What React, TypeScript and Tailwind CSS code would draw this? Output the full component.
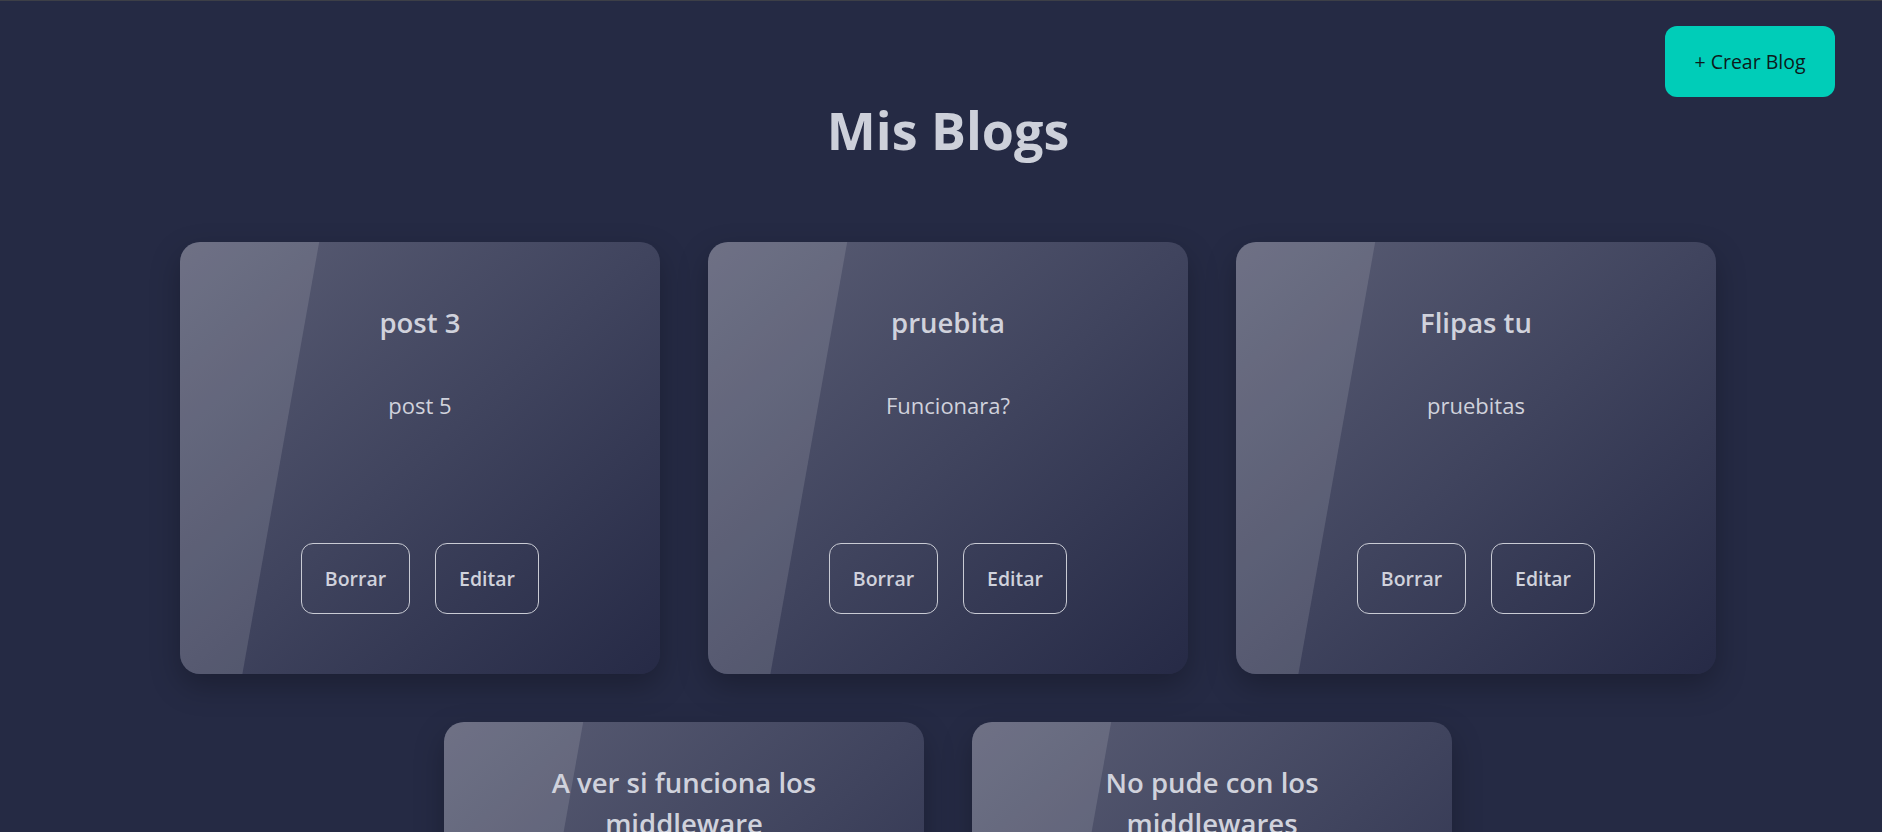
import React from "react";

type Blog = { title: string; desc: string };

const blogs: Blog[] = [
  { title: "post 3", desc: "post 5" },
  { title: "pruebita", desc: "Funcionara?" },
  { title: "Flipas tu", desc: "pruebitas" },
  { title: "A ver si funciona los middleware", desc: "middleware" },
  { title: "No pude con los middlewares", desc: "middlewares" },
];

function Card({ blog }: { blog: Blog }) {
  return (
    <div className="relative m-6 flex h-[432px] w-[480px] flex-col items-center justify-center overflow-hidden rounded-[20px] bg-linear-to-br from-[#5b5e75] via-[#40445e] to-[#262a46] shadow-[0_12px_30px_rgba(0,0,0,0.25)]">
      <div className="pointer-events-none absolute inset-0 bg-white/[0.12] [clip-path:polygon(0_0,29%_0,13%_100%,0_100%)]" />
      <h3 className="relative max-w-[340px] text-center text-[27.5px] leading-[41px] font-semibold text-[#d0d2dc]">
        {blog.title}
      </h3>
      <p className="relative mt-[44px] text-center text-[22px] leading-[36px] text-[#d0d2dc]">
        {blog.desc}
      </p>
      <div className="relative mt-[120px] flex gap-[25px]">
        <button className="flex h-[71px] w-[109px] items-center justify-center rounded-[12px] border border-[#c9cbd4] text-[19.5px] font-semibold text-[#d0d2dc]">
          Borrar
        </button>
        <button className="flex h-[71px] w-[104px] items-center justify-center rounded-[12px] border border-[#c9cbd4] text-[19.5px] font-semibold text-[#d0d2dc]">
          Editar
        </button>
      </div>
    </div>
  );
}

export default function App() {
  return (
    <div
      className="relative min-h-screen border-t border-[#3d3f47] bg-[#252a44] pl-[14px]"
      style={{ fontFamily: '"Open Sans", "Noto Sans", sans-serif' }}
    >
      <button className="absolute top-[25px] right-[47px] flex h-[71px] w-[170px] items-center justify-center rounded-[12px] bg-[#00cdb8] text-[19.5px] text-[#0d1a1c]">
        + Crear Blog
      </button>
      <div className="pt-[98px]">
        <h1 className="text-center text-[52px] leading-[62px] font-bold text-[#cdd0da]">
          Mis Blogs
        </h1>
        <div className="mx-auto mt-[57px] flex w-[1584px] flex-wrap justify-center">
          {blogs.map((b, i) => (
            <Card key={i} blog={b} />
          ))}
        </div>
      </div>
    </div>
  );
}
